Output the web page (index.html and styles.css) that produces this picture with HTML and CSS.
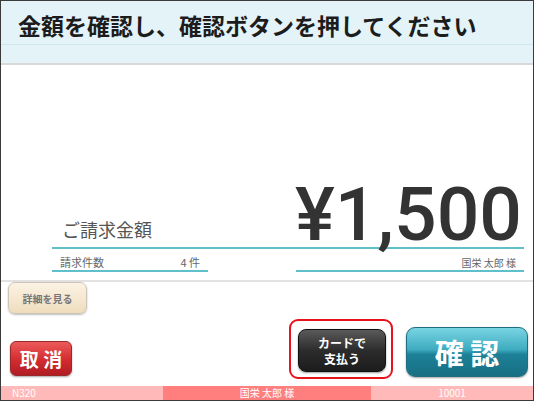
FILE: index.html
```html
<!DOCTYPE html>
<html lang="ja">
   <head>
      <meta charset="UTF-8">
      <meta name="viewport" content="width=device-width, initial-scale=1.0">
      <title>金額確認</title>
      <link rel="stylesheet" href="styles.css">
   </head>
   <body>
      <div class="screen">
         <div class="header">
            <h1 class="title">金額を確認し、確認ボタンを押してください</h1>
         </div>
         <div class="main">
            <div class="amount-row">
               <span class="amount-label">ご請求金額</span>
               <span class="amount">¥1,500</span>
            </div>
            <div class="sub-row">
               <div class="sub-cell count">
                  <span>請求件数</span>
                  <span>4 件</span>
               </div>
               <div class="sub-cell name">国栄 太郎 様</div>
            </div>
            <div class="actions">
               <div class="actions-left">
                  <button class="btn btn-detail">詳細を見る</button>
                  <button class="btn btn-cancel">取 消</button>
               </div>
               <div class="actions-right">
                  <div class="highlight">
                     <button class="btn btn-card">カードで<br>支払う</button>
                  </div>
                  <button class="btn btn-confirm">確 認</button>
               </div>
            </div>
         </div>
         <div class="footer">
            <div class="foot-cell foot-id">N320</div>
            <div class="foot-cell foot-name">国栄 太郎 様</div>
            <div class="foot-cell foot-no">10001</div>
         </div>
      </div>
   </body>
</html>
```

FILE: styles.css
```css
body {
   margin: 0;
   background: #fff;
   font-family: "Noto Sans CJK JP", "Noto Sans", sans-serif;
}
.screen {
   width: 534px;
   height: 401px;
   box-sizing: border-box;
   border: 1px solid #3a3a3a;
   display: flex;
   flex-direction: column;
   overflow: hidden;
}
.header {
   background: #e3f3f7;
   border-bottom: 2px solid #d9d9d9;
   padding-bottom: 18px;
}
.title {
   margin: 0;
   height: 44px;
   box-sizing: border-box;
   padding: 5px 0 0 17px;
   line-height: 39px;
   font-size: 23px;
   font-weight: 700;
   color: #1c1c1c;
   border-bottom: 1px solid #cfe7ed;
}
.main {
   flex: 1;
   display: flex;
   flex-direction: column;
}
.amount-row {
   display: flex;
   align-items: flex-end;
   justify-content: space-between;
   margin: 116px 9px 0 51px;
   border-bottom: 2px solid #5fc0cb;
}
.amount-label {
   padding: 0 0 8px 10px;
   font-size: 18px;
   line-height: 20px;
   color: #555;
}
.amount {
   font-family: Roboto, "Open Sans", sans-serif;
   font-weight: 500;
   font-size: 75px;
   line-height: 66px;
   padding-right: 2px;
   color: #333;
}
.sub-row {
   display: flex;
   justify-content: space-between;
   margin: 0 9px 0 51px;
}
.sub-cell {
   border-bottom: 2px solid #5fc0cb;
   padding: 6px 8px 1px;
   font-size: 11px;
   line-height: 14px;
   color: #666;
}
.count {
   width: 156px;
   box-sizing: border-box;
   display: flex;
   justify-content: space-between;
}
.name {
   width: 228px;
   box-sizing: border-box;
   text-align: right;
   font-size: 10px;
   line-height: 10px;
   padding: 9px 8px 2px;
}
.actions {
   margin-top: 8px;
   border-top: 2px solid #e2e2e2;
   flex: 1;
   display: flex;
   padding: 0 5px 0 7px;
}
.actions-left {
   display: flex;
   flex-direction: column;
   justify-content: space-between;
   align-items: flex-start;
   padding-bottom: 10px;
}
.actions-right {
   margin-left: auto;
   display: flex;
   align-items: flex-start;
   gap: 13px;
   padding-top: 37px;
}
.btn {
   font-family: "Noto Sans CJK JP", sans-serif;
   font-weight: 700;
   cursor: pointer;
   padding: 0;
}
.btn-detail {
   width: 79px;
   height: 32px;
   border: 1px solid #cbc5b9;
   border-radius: 7px;
   background: linear-gradient(#fcf3e4, #efdcbd);
   box-shadow: 0 1px 2px rgba(0, 0, 0, 0.25);
   color: #767676;
   font-size: 10px;
}
.btn-cancel {
   margin-left: 2px;
   width: 62px;
   height: 35px;
   border: 1px solid #9a2a2a;
   border-radius: 6px;
   background: linear-gradient(#ec5a5a, #d22c30 55%, #b01d24);
   box-shadow: 0 1px 2px rgba(0, 0, 0, 0.35);
   color: #fff;
   font-size: 19px;
   line-height: 1;
}
.highlight {
   border: 2px solid #e8121c;
   border-radius: 9px;
   padding: 8px 5px 5px 7px;
   width: 104px;
   box-sizing: border-box;
}
.btn-card {
   display: block;
   width: 88px;
   height: 43px;
   border: 1px solid #111;
   border-radius: 8px;
   background: linear-gradient(#5a5a5a, #2c2c2c 50%, #1c1c1c);
   box-shadow: 0 1px 2px rgba(0, 0, 0, 0.4);
   color: #fff;
   font-size: 12px;
   line-height: 16px;
}
.btn-confirm {
   margin-top: 8px;
   width: 122px;
   height: 50px;
   border: 1px solid #1f6e80;
   border-radius: 9px;
   background: linear-gradient(#79d5e2, #3eabc0 45%, #1d8197 55%, #186f84);
   box-shadow: 0 1px 2px rgba(0, 0, 0, 0.35);
   color: #fff;
   font-size: 29px;
   line-height: 1;
}
.footer {
   height: 14px;
   display: flex;
   font-size: 10px;
   line-height: 14px;
   color: #fff;
}
.foot-cell {
   background: #ffb9b9;
}
.foot-id {
   width: 162px;
   padding-left: 11px;
   box-sizing: border-box;
}
.foot-name {
   width: 208px;
   background: #ff7f7f;
   text-align: center;
}
.foot-no {
   flex: 1;
   text-align: center;
}
```
